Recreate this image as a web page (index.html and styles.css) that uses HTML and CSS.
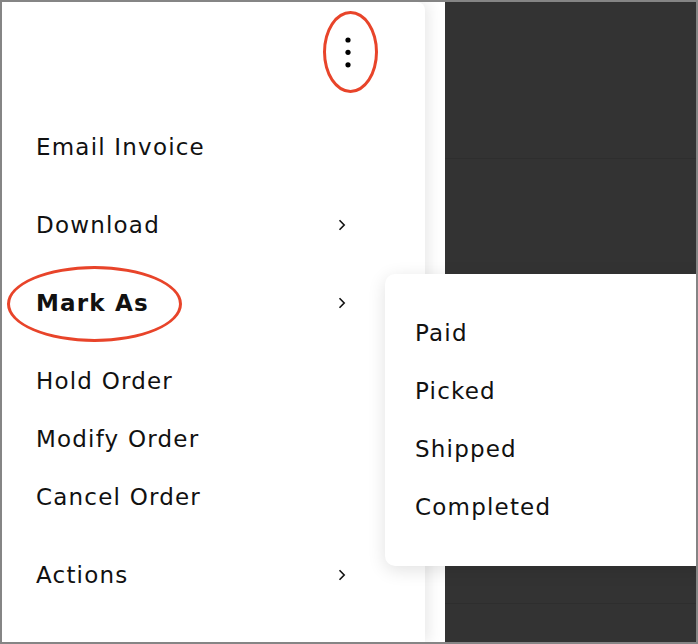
FILE: index.html
```html
<html lang="en">
<head>
    <meta charset="UTF-8">
    <meta name="viewport" content="width=device-width, initial-scale=1.0">
    <title>Order Menu</title>

    <link rel="stylesheet" href="styles.css">
</head>
<body>

<div class="frame">
    <div class="menu">
        <div class="menu-head">
            <svg class="kebab" width="6" height="31" viewBox="0 0 6 31">
                <circle cx="3" cy="3" r="2.6"/>
                <circle cx="3" cy="15.3" r="2.6"/>
                <circle cx="3" cy="27.8" r="2.6"/>
            </svg>
        </div>

        <div class="item">Email Invoice</div>
        <div class="item sub">Download
            <svg class="chev" width="8" height="12" viewBox="0 0 8 12"><path d="M1.5 1.2 L6.2 6 L1.5 10.8"/></svg>
        </div>
        <div class="item sub bold">Mark As
            <svg class="chev" width="8" height="12" viewBox="0 0 8 12"><path d="M1.5 1.2 L6.2 6 L1.5 10.8"/></svg>
        </div>
        <div class="group">
            <div class="item">Hold Order</div>
            <div class="item">Modify Order</div>
            <div class="item">Cancel Order</div>
        </div>
        <div class="item sub">Actions
            <svg class="chev" width="8" height="12" viewBox="0 0 8 12"><path d="M1.5 1.2 L6.2 6 L1.5 10.8"/></svg>
        </div>
    </div>

    <div class="gutter"></div>

    <div class="backdrop">
        <div class="row row-top"></div>
        <div class="row row-mid"></div>
        <div class="row"></div>
    </div>

    <!-- submenu of Mark As -->
    <div class="submenu">
        <div class="item">Paid</div>
        <div class="item">Picked</div>
        <div class="item">Shipped</div>
        <div class="item">Completed</div>
    </div>

    <!-- red annotation rings -->
    <div class="ring ring-kebab"></div>
    <div class="ring ring-mark"></div>
</div>

</body>
</html>
```

FILE: styles.css
```css
* {
    margin: 0;
    padding: 0;
    box-sizing: border-box;
}

body {
    font-family: 'DejaVu Sans', 'Liberation Sans', sans-serif;
    background-color: #fff;
    color: #111;
}

.frame {
    position: relative;
    width: 698px;
    height: 644px;
    border: 2px solid #858585;
    display: flex;
    overflow: hidden;
}

.menu {
    width: 423px;
    background-color: #fff;
    border-top-right-radius: 8px;
    box-shadow: 4px 0 14px rgba(0, 0, 0, 0.09);
    position: relative;
    z-index: 1;
}

.menu-head {
    height: 116px;
    display: flex;
    justify-content: flex-end;
    padding: 35px 74px 0 0;
}

.kebab circle {
    fill: #000;
}

.item {
    height: 58px;
    display: flex;
    align-items: center;
    justify-content: space-between;
    padding: 0 79px 0 34px;
    font-size: 23px;
    letter-spacing: 1.2px;
    white-space: nowrap;
}

.menu > .item,
.group {
    margin-bottom: 20px;
}

.bold {
    font-weight: bold;
}

.chev {
    fill: none;
    stroke: #111;
    stroke-width: 1.6;
}

.gutter {
    width: 20px;
    background-color: #fff;
}

.backdrop {
    flex: 1;
    background-color: #333;
    display: flex;
    flex-direction: column;
}

.row {
    flex: 1;
}

.row-top {
    flex: none;
    height: 157px;
    border-bottom: 1px solid #2e2e2e;
}

.row-mid {
    flex: none;
    height: 445px;
    border-bottom: 1px solid #2e2e2e;
}

.submenu {
    position: absolute;
    left: 383px;
    top: 272px;
    width: 320px;
    height: 292px;
    background-color: #fff;
    border-radius: 10px 0 0 10px;
    box-shadow: 0 4px 18px rgba(0, 0, 0, 0.12);
    padding-top: 30px;
    z-index: 2;
}

.submenu .item {
    padding-left: 30px;
}

.ring {
    position: absolute;
    border: 3px solid #e8442a;
    border-radius: 50%;
    z-index: 3;
}

.ring-kebab {
    left: 321px;
    top: 9px;
    width: 55px;
    height: 82px;
}

.ring-mark {
    left: 5px;
    top: 264px;
    width: 175px;
    height: 76px;
}
```
